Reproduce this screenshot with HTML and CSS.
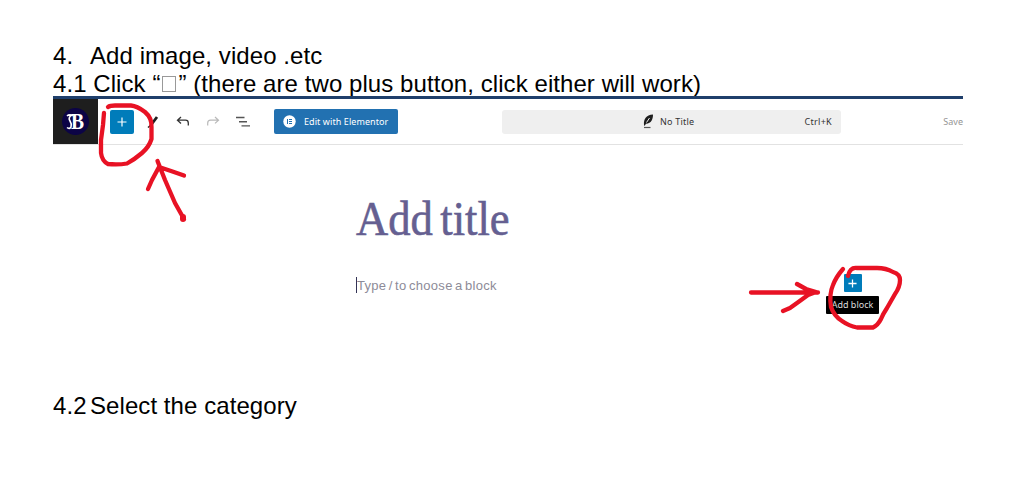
FILE: index.html
```html
<!DOCTYPE html>
<html lang="en">
<head>
    <meta charset="UTF-8">
    <meta name="viewport" content="width=device-width, initial-scale=1.0">
    <title>Add image, video .etc</title>
    <link rel="stylesheet" href="styles.css">
</head>
<body>
    <div class="page">
        <div class="step step-main"><span class="num">4.</span><span>Add image, video .etc</span></div>
        <div class="step step-click">4.1 Click “<span class="missing"></span>” (there are two plus button, click either will work)</div>

        <div class="editor">
            <div class="toolbar">
                <div class="logo">
                    <div class="logo-circle">
                        <svg width="8" height="18" viewBox="0 0 8 18"><path d="M1 3Q3 1 7 2.500M5 2.500Q2 5 4 8T5 14Q3.500 16.500 1 14.500" stroke="#fff" stroke-width="1.600" fill="none"/></svg>
                        <b>B</b>
                    </div>
                </div>
                <div class="tools">
                    <button class="plus">
                        <svg width="10" height="10" viewBox="0 0 10 10"><path d="M5 .5v9M.5 5h9" stroke="#fff" stroke-width="1.2"/></svg>
                    </button>
                    <svg class="pen" width="12" height="14" viewBox="0 0 12 14"><path d="M1 12.500L4 10" stroke="#1e1e1e" stroke-width="1.500"/><path d="M4 10L10 2" stroke="#1e1e1e" stroke-width="2.800"/></svg>
                    <svg class="undo" width="14" height="12" viewBox="0 0 14 12"><path d="M5 1L1.500 4.200 5 7.400M1.800 4.200H9.500Q12.300 4.200 12.300 7V9.500" stroke="#333" stroke-width="1.300" fill="none"/></svg>
                    <svg class="redo" width="14" height="12" viewBox="0 0 14 12"><path d="M9 1l3.500 3.200L9 7.400M12.200 4.200H4.500Q1.700 4.200 1.700 7V9.500" stroke="#b9b9b9" stroke-width="1.200" fill="none"/></svg>
                    <svg class="outline" width="15" height="12" viewBox="0 0 15 12"><path d="M0 1.500h8.500M3 5.700h8M5.500 9.900h8.500" stroke="#555" stroke-width="1.400"/></svg>
                </div>
                <button class="elementor">
                    <svg width="13" height="13" viewBox="0 0 13 13"><circle cx="6.500" cy="6.500" r="6.200" fill="#fff"/><path d="M4.500 4v5M6 4.500h3M6 6.500h3M6 8.500h3" stroke="#2271b1" stroke-width="1"/></svg>
                    <span>Edit with Elementor</span>
                </button>
                <div class="title-bar">
                    <svg class="quill" width="11" height="15" viewBox="0 0 11 15"><path d="M1 11C.500 5 3 1 10 .500 10 5 8.500 9.500 3 9.700L1.500 12z" fill="#1e1e1e"/><path d="M3.500 8.500L6.500 4" stroke="#eee" stroke-width="1"/><path d="M1 13.500h6.500" stroke="#555" stroke-width="1.200"/></svg>
                    <span class="doc-name">No Title</span>
                    <span class="shortcut">Ctrl+K</span>
                </div>
                <span class="save">Save</span>
            </div>

            <div class="canvas">
                <div class="post-title">Add title</div>
                <div class="block-row">
                    <div class="placeholder">Type / to choose a block</div>
                    <div class="inserter">
                        <button class="plus plus-small">
                            <svg width="9" height="9" viewBox="0 0 10 10"><path d="M5 .5v9M.5 5h9" stroke="#fff" stroke-width="1.400"/></svg>
                        </button>
                        <div class="tooltip">Add block</div>
                    </div>
                </div>
            </div>

            <!-- red pen marks -->
            <svg class="marks" viewBox="53 97 910 240">
                <path d="M108 107Q110 105.500 115 105.500H131Q137 106 145 112Q152 118 151.500 127V139Q149 147 142 153Q135 159 127 163.500Q118 165 108 164Q102 161 101 153V140L103 125L104 113"/>
                <path d="M157.500 161L165 180L175 203L184 219M148 189L152 180L159 167L171 171L184 175.500"/>
                <path d="M183 217v2" stroke-width="6"/>
                <path d="M751 292.500H780L818 292.500M797 284L806 289L816 292L808 295L797 303L790 308L783 311"/>
                <path d="M843 269Q836 277 833 285Q829 294 831 307Q834 316 842 321Q849 326 857 327.500H873Q878 325 881 319Q883 314 887 308L895 294Q900 287 900 280Q900 274 893 272Q886 268 877 268H857Q850 267 848 276"/>
            </svg>
        </div>

        <div class="step step-select"><span class="num">4.2</span><span>Select the category</span></div>
    </div>
</body>
</html>
```
FILE: styles.css
```css
body {
    margin: 0;
    background: #fff;
    color: #000;
    font-family: "Liberation Sans", Arial, sans-serif;
}
.page {
    width: 910px;
    height: 436px;
    padding: 42px 0 0 53px;
}
.step {
    display: flex;
    font-size: 24px;
    letter-spacing: .07px;
    line-height: 28px;
    white-space: pre;
}
.num { width: 37px; }
.missing {
    width: 14px;
    height: 16px;
    margin: 6px 2px 0 2px;
    border: 1px solid #999;
    box-sizing: border-box;
}
.editor {
    position: relative;
    height: 241px;
    margin-top: -2px;
}
.toolbar {
    display: flex;
    align-items: center;
    height: 49px;
    box-sizing: border-box;
    border-top: 3px solid #1f3f6b;
    border-bottom: 1px solid #e2e2e2;
    font-family: "Noto Sans", sans-serif;
    font-size: 9px;
    color: #333;
}
.logo {
    display: flex;
    align-items: center;
    justify-content: center;
    width: 45px;
    height: 45px;
    background: #1e1e1e;
}
.logo-circle {
    display: flex;
    align-items: center;
    justify-content: center;
    width: 27px;
    height: 27px;
    border-radius: 50%;
    background: #0c0446;
    color: #fff;
    font-family: "Liberation Serif", serif;
}
.logo-circle svg { margin-right: -3px; }
.logo-circle b { font-size: 23px; line-height: 23px; transform: scaleX(.85); transform-origin: left; margin-right: -2px; }
button {
    display: flex;
    align-items: center;
    padding: 0;
    border: none;
    border-radius: 2px;
    color: #fff;
}
.tools {
    display: flex;
    align-items: center;
    width: 176px;
    padding-left: 12px;
    box-sizing: border-box;
}
.plus {
    justify-content: center;
    width: 24px;
    height: 24px;
    background: #007cba;
}
.pen { margin-left: 13px; }
.undo { margin-left: 17px; }
.redo { margin-left: 16px; }
.outline { margin-left: 16px; }
.elementor {
    width: 124px;
    height: 25px;
    padding-left: 9px;
    gap: 8px;
    box-sizing: border-box;
    background: #2271b1;
    font-family: "Noto Sans", sans-serif;
    font-size: 9px;
    letter-spacing: .08px;
    white-space: nowrap;
}
.title-bar {
    display: flex;
    align-items: center;
    width: 339px;
    height: 24px;
    margin-left: 104px;
    padding: 0 9px 0 141px;
    box-sizing: border-box;
    border-radius: 3px;
    background: #efefef;
}
.doc-name { margin-left: 6px; letter-spacing: .2px; }
.shortcut { margin-left: auto; letter-spacing: .3px; }
.save {
    margin-left: auto;
    color: #949494;
}
.canvas { padding: 46px 0 0 303px; }
.post-title {
    width: 240px;
    color: #655f91;
    font-family: "Liberation Serif", serif;
    font-size: 49px;
    line-height: 56px;
    word-spacing: -4px;
    transform: scaleX(.91);
    transform-origin: left;
    -webkit-text-stroke: .6px #655f91;
}
.block-row {
    display: flex;
    align-items: flex-start;
    padding-top: 27px;
}
.placeholder {
    width: 141px;
    height: 16px;
    margin-top: 3px;
    border-left: 1px solid #333355;
    color: #8d8b98;
    font-size: 13px;
    letter-spacing: .3px;
    word-spacing: -1.5px;
    line-height: 17px;
    white-space: nowrap;
}
.inserter {
    display: flex;
    flex-direction: column;
    align-items: center;
    margin-left: 328px;
}
.plus-small {
    width: 18px;
    height: 18px;
    border-radius: 1px;
}
.tooltip {
    width: 53px;
    height: 18px;
    margin-top: 4px;
    border-radius: 1px;
    background: #000;
    color: #ddd;
    font: 9px/18px "Noto Sans", sans-serif;
    text-align: center;
}
.marks {
    position: absolute;
    left: 0;
    top: 1px;
    width: 910px;
    height: 240px;
    fill: none;
    stroke: #e81224;
    stroke-width: 4.3;
    stroke-linecap: round;
    stroke-linejoin: round;
}
.step-select { margin-top: 55px; }
```
